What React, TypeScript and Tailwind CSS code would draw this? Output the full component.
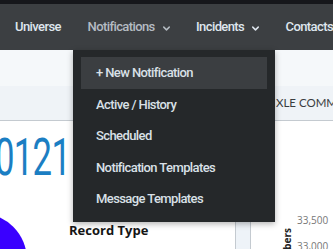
import { ChevronDown } from "lucide-react";

const navFont = { fontFamily: "Roboto, 'Liberation Sans', sans-serif" };

function NavItem({ label, dim, caret }: { label: string; dim?: boolean; caret?: boolean }) {
  return (
    <div
      className={`flex items-center gap-[6px] text-[13px] font-medium tracking-[-0.6px] ${
        dim ? "text-[#b4bbc2]" : "text-[#dfe6ee]"
      }`}
    >
      <span>{label}</span>
      {caret && <ChevronDown size={11} strokeWidth={3.2} className="mt-[2px]" />}
    </div>
  );
}

const menu = ["+ New Notification", "Active / History", "Scheduled", "Notification Templates", "Message Templates"];

export default function App() {
  return (
    <div className="relative h-[249px] w-[333px] overflow-hidden bg-white" style={navFont}>
      <div className="h-[4px] bg-[#16171b]" />
      <nav className="flex h-[46px] items-center bg-[#3c3f42] pl-[15px]">
        <div className="w-[73px]">
          <NavItem label="Universe" />
        </div>
        <div className="w-[109px]">
          <NavItem label="Notifications" dim caret />
        </div>
        <div className="w-[90px]">
          <NavItem label="Incidents" caret />
        </div>
        <NavItem label="Contacts" />
      </nav>

      <div className="border-b border-[#c4cad0]">
        <div className="h-[36px] bg-[#f5f8fa]" />
        <div className="flex h-[34px] items-center bg-[#eff3f7] pl-[276px]">
          <span
            className="whitespace-nowrap text-[11.5px] text-[#3a3d40]"
            style={{ fontFamily: "Lato, 'Open Sans', sans-serif" }}
          >
            XLE COMMUNICATIONS
          </span>
        </div>
      </div>

      <div className="flex h-[128px]">
        <div className="flex w-[235px] flex-col">
          <div className="-ml-[5px] mt-[11px] origin-left scale-x-[0.68] text-[51px] font-normal leading-[51px] tracking-[-1px] text-[#1b7ec3]">
            0121
          </div>
          <div className="mt-auto flex items-end">
            <svg width="69" height="44" viewBox="0 0 69 44" className="shrink-0">
              <circle cx="-20" cy="55" r="47" fill="#3a00ff" />
            </svg>
            <div
              className="mb-[9px] text-[13px] font-bold text-[#161616]"
              style={{ fontFamily: "'Open Sans', sans-serif" }}
            >
              Record Type
            </div>
          </div>
        </div>
        <div className="w-[16px] border-x border-[#c4cad0] bg-[#eef3f8]" />
        <div className="relative flex-1" style={{ fontFamily: "'Open Sans', sans-serif" }}>
          <div className="flex flex-col pl-[46px] pt-[86px] text-[10px] leading-[26px] text-[#777]">
            <span>33,500</span>
            <span>33,000</span>
          </div>
          <div className="absolute left-[29px] top-[154px] origin-top-left -rotate-90 whitespace-nowrap text-[10px] font-bold text-[#222]">
            Members
          </div>
        </div>
      </div>

      <div className="absolute left-[73px] top-[50px] w-[202px] bg-[#25282a] px-[8px] py-[7px] shadow-[0_2px_6px_rgba(0,0,0,0.3)]">
        {menu.map((m, i) => (
          <div
            key={m}
            className={`flex h-[31.5px] items-center pl-[15px] text-[13px] font-medium tracking-[-0.6px] text-[#d9e0e7] ${
              i === 0 ? "bg-[#3b3e41]" : ""
            }`}
          >
            {m}
          </div>
        ))}
      </div>
    </div>
  );
}
